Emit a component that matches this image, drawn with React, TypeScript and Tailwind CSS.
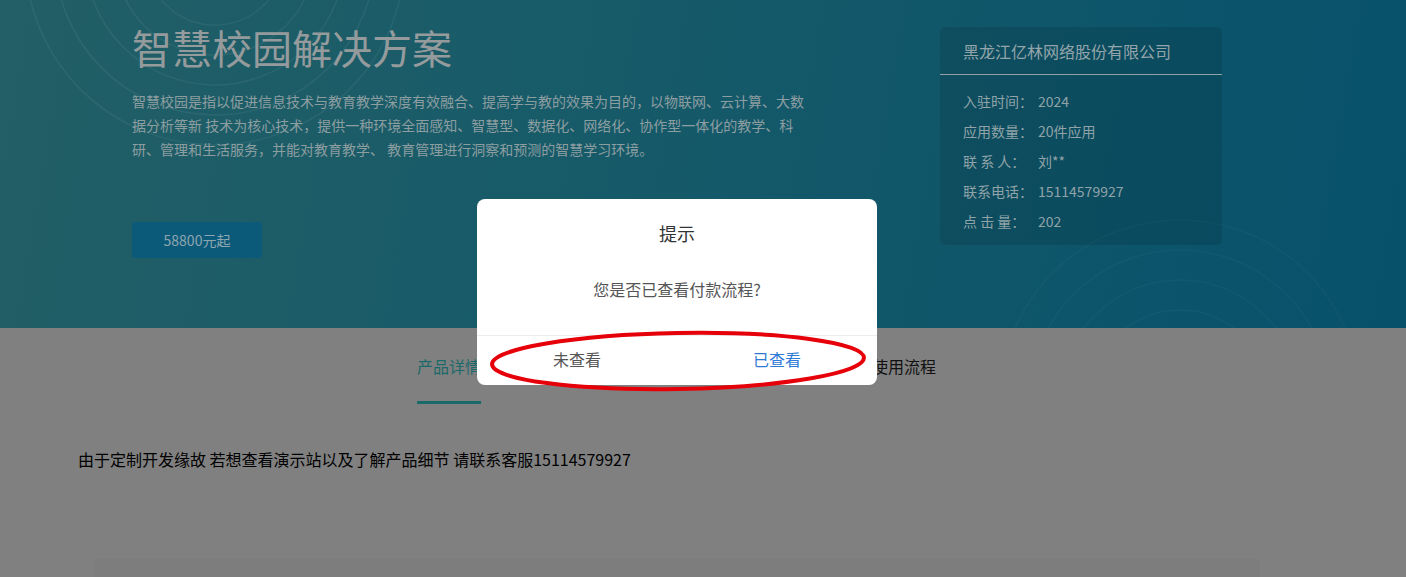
import React from "react";

const info = [
  { label: "入驻时间：", value: "2024" },
  { label: "应用数量：", value: "20件应用" },
  { label: "联 系 人：", value: "刘**" },
  { label: "联系电话：", value: "15114579927" },
  { label: "点 击 量：", value: "202" },
];

// only the outer two tabs show past the dialog
const tabs = ["产品详情", "使用流程"];

function Rings({ cx, cy, radii, stroke }: { cx: number; cy: number; radii: number[]; stroke: string }) {
  return (
    <>
      {radii.map((r) => (
        <circle key={r} cx={cx} cy={cy} r={r} fill="none" stroke={stroke} strokeWidth="1.5" />
      ))}
    </>
  );
}

export default function App() {
  return (
    <div
      className="relative w-full h-[577px] overflow-hidden bg-[#808080]"
      style={{ fontFamily: '"Noto Sans CJK SC", "Noto Sans", sans-serif' }}
    >
      {/* Banner */}
      <section className="relative h-[328px] bg-[linear-gradient(100deg,#225f66_0%,#165a69_45%,#07516b_100%)] overflow-hidden">
        <svg className="absolute inset-0 pointer-events-none" width="1406" height="328">
          <Rings cx={215} cy={-45} radii={[70, 100, 130, 160, 190]} stroke="rgba(255,255,255,0.06)" />
          <Rings cx={1180} cy={400} radii={[90, 120, 150, 180]} stroke="rgba(255,255,255,0.03)" />
        </svg>

        <div className="relative flex justify-between pl-[132px] pr-[184px] pt-[20px]">
          <div className="w-[690px]">
            <h1 className="text-[40px] leading-[54px] text-[#959b9c]">智慧校园解决方案</h1>
            <p className="mt-[15px] text-[14px] leading-[24px] text-[#8d9ea1]">
              智慧校园是指以促进信息技术与教育教学深度有效融合、提高学与教的效果为目的，以物联网、云计算、大数
              <br />
              据分析等新 技术为核心技术，提供一种环境全面感知、智慧型、数据化、网络化、协作型一体化的教学、科
              <br />
              研、管理和生活服务，并能对教育教学、 教育管理进行洞察和预测的智慧学习环境。
            </p>
            <div className="mt-[61px] w-[130px] h-[36px] rounded-[3px] bg-[#0c5a79] flex items-center justify-center text-[14px] text-[#8ea6b0]">
              58800元起
            </div>
          </div>

          <div className="mt-[7px] w-[282px] h-[218px] rounded-[5px] bg-black/10">
            <div className="h-[48px] flex items-center px-[23px] border-b border-[#8ea2a8] text-[16px] text-[#93a5aa]">
              黑龙江亿林网络股份有限公司
            </div>
            <div className="pt-[11px] px-[23px]">
              {info.map((row) => (
                <div key={row.label} className="flex h-[30px] items-center text-[14px] text-[#8fa3a8]">
                  <span className="w-[75px] whitespace-pre">{row.label}</span>
                  <span>{row.value}</span>
                </div>
              ))}
            </div>
          </div>
        </div>
      </section>

      {/* Tabs */}
      <div className="pl-[417px] pt-[26px]">
        <div className="flex w-[519px] justify-between">
          {tabs.map((t, i) => (
            <div key={t} className="flex flex-col items-start">
              <span className={`text-[16px] leading-[24px] ${i === 0 ? "text-[#1b6a6a]" : "text-[#111]"}`}>{t}</span>
              <span className={`mt-[23px] h-[3px] w-[64px] ${i === 0 ? "bg-[#1b6a6a]" : "bg-transparent"}`} />
            </div>
          ))}
        </div>
      </div>

      <p className="pl-[78px] mt-[43px] text-[16px] leading-[24px] text-black">
        由于定制开发缘故 若想查看演示站以及了解产品细节 请联系客服15114579927
      </p>

      <div className="ml-[94px] mt-[88px] w-[1166px] h-[40px] bg-[#7d7d7d]" />

      {/* Dialog */}
      <div className="absolute left-[477px] top-[199px] w-[400px] h-[186px] rounded-[8px] bg-white flex flex-col">
        <div className="pt-[22px] text-center text-[18px] leading-[24px] text-[#333]">提示</div>
        <div className="mt-[32px] text-center text-[16px] leading-[24px] text-[#555]">您是否已查看付款流程?</div>
        <div className="mt-auto h-[50px] pb-[3px] border-t border-[#ececec] flex">
          <div className="flex-1 flex items-center justify-center text-[16px] text-[#555]">未查看</div>
          <div className="flex-1 flex items-center justify-center text-[16px] text-[#2f7ad6]">已查看</div>
        </div>
      </div>

      {/* Red annotation */}
      <svg className="absolute left-[484px] top-[326px] pointer-events-none" width="392" height="72">
        <ellipse cx="194" cy="35" rx="186" ry="28" fill="none" stroke="#e6000a" strokeWidth="4" transform="rotate(-1 194 35)" />
      </svg>
    </div>
  );
}
